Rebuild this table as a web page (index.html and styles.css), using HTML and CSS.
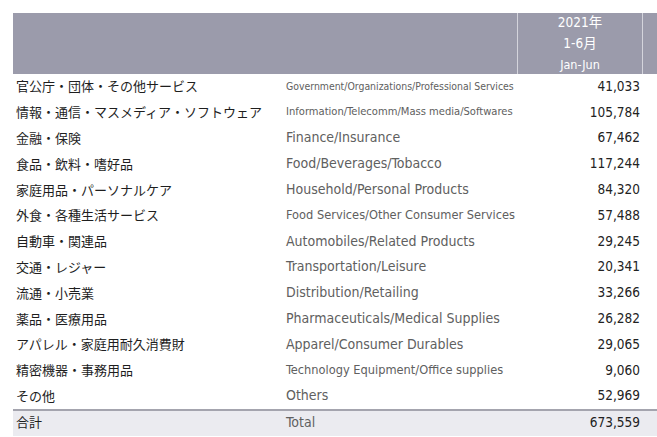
FILE: index.html
```html
<!DOCTYPE html>
<html lang="ja">
<head>
<meta charset="utf-8">
<link rel="stylesheet" href="styles.css">
</head>
<body>
<div class="table">
  <div class="head">
    <div class="h-label"></div>
    <div class="h-period">
      <div class="h-line">2021年</div>
      <div class="h-line">1-6月</div>
      <div class="h-line small">Jan-Jun</div>
    </div>
    <div class="h-next"></div>
  </div>
  <div class="row"><span class="jp">官公庁・団体・その他サービス</span><span class="en xs">Government/Organizations/Professional Services</span><span class="num">41,033</span></div>
  <div class="row"><span class="jp">情報・通信・マスメディア・ソフトウェア</span><span class="en xs2">Information/Telecomm/Mass media/Softwares</span><span class="num">105,784</span></div>
  <div class="row"><span class="jp">金融・保険</span><span class="en">Finance/Insurance</span><span class="num">67,462</span></div>
  <div class="row"><span class="jp">食品・飲料・嗜好品</span><span class="en">Food/Beverages/Tobacco</span><span class="num">117,244</span></div>
  <div class="row"><span class="jp">家庭用品・パーソナルケア</span><span class="en">Household/Personal Products</span><span class="num">84,320</span></div>
  <div class="row"><span class="jp">外食・各種生活サービス</span><span class="en sm">Food Services/Other Consumer Services</span><span class="num">57,488</span></div>
  <div class="row"><span class="jp">自動車・関連品</span><span class="en">Automobiles/Related Products</span><span class="num">29,245</span></div>
  <div class="row"><span class="jp">交通・レジャー</span><span class="en">Transportation/Leisure</span><span class="num">20,341</span></div>
  <div class="row"><span class="jp">流通・小売業</span><span class="en">Distribution/Retailing</span><span class="num">33,266</span></div>
  <div class="row"><span class="jp">薬品・医療用品</span><span class="en">Pharmaceuticals/Medical Supplies</span><span class="num">26,282</span></div>
  <div class="row"><span class="jp">アパレル・家庭用耐久消費財</span><span class="en">Apparel/Consumer Durables</span><span class="num">29,065</span></div>
  <div class="row"><span class="jp">精密機器・事務用品</span><span class="en sm">Technology Equipment/Office supplies</span><span class="num">9,060</span></div>
  <div class="row"><span class="jp">その他</span><span class="en">Others</span><span class="num">52,969</span></div>
  <div class="row total"><span class="jp">合計</span><span class="en">Total</span><span class="num">673,559</span></div>
</div>
</body>
</html>
```

FILE: styles.css
```css
html, body {
  margin: 0;
  padding: 0;
  background: #ffffff;
  overflow: hidden;
}

body {
  font-family: "DejaVu Sans Condensed", "DejaVu Sans", "Noto Sans CJK JP", sans-serif;
  color: #222222;
}

.table {
  margin: 13px 0 0 13px;
  width: 660px;
}

.head {
  display: flex;
  height: 61px;
  background: #9b9bab;
}

.h-label {
  width: 504px;
}

.h-period {
  width: 124px;
  border-left: 1px solid #d4d4dc;
  border-right: 1px solid #d4d4dc;
  color: #ffffff;
  text-align: center;
  font-size: 13.5px;
  font-family: "DejaVu Sans Condensed", "Noto Sans CJK JP", sans-serif;
}

.h-line {
  height: 21px;
  line-height: 21px;
}

.h-line:first-child {
  margin-top: -1px;
}

.h-line.small {
  font-size: 12.5px;
}

.h-next {
  flex: 1;
}

.row {
  display: grid;
  grid-template-columns: 270px 235px 124px 1fr;
  align-items: center;
  box-sizing: border-box;
  height: 25.8px;
  padding-bottom: 2px;
}

.jp {
  padding-left: 3px;
  font-family: "Noto Sans CJK JP", sans-serif;
  font-size: 13px;
  color: #1e1e1e;
  white-space: nowrap;
}

.en {
  padding-left: 3px;
  font-size: 14px;
  color: #606060;
  white-space: nowrap;
}

.en.sm {
  font-size: 12.7px;
}

.en.xs {
  font-size: 10.4px;
}

.en.xs2 {
  font-size: 11.1px;
}

.num {
  text-align: right;
  padding-right: 2px;
  font-size: 13.5px;
  color: #222222;
}

.total {
  height: 27px;
  padding-bottom: 4px;
  background: #ebebf0;
  border-top: 2px solid #a4a4ae;
}
```
